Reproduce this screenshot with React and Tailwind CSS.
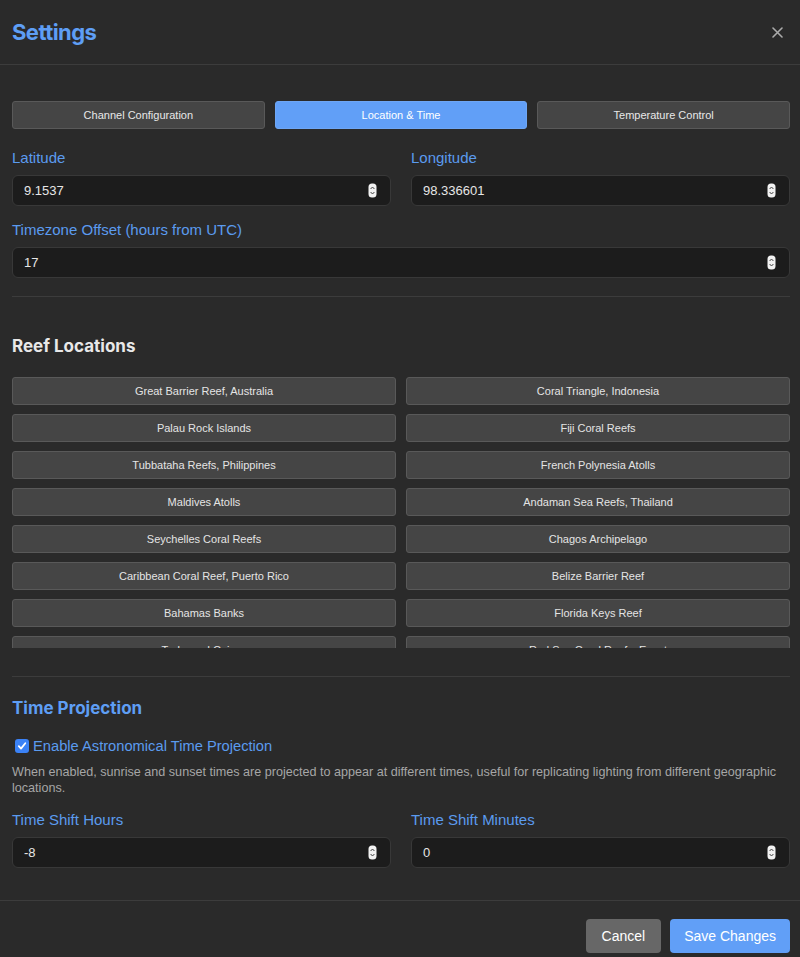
import React, { useState } from 'react';

const reefs = [
  'Great Barrier Reef, Australia',
  'Coral Triangle, Indonesia',
  'Palau Rock Islands',
  'Fiji Coral Reefs',
  'Tubbataha Reefs, Philippines',
  'French Polynesia Atolls',
  'Maldives Atolls',
  'Andaman Sea Reefs, Thailand',
  'Seychelles Coral Reefs',
  'Chagos Archipelago',
  'Caribbean Coral Reef, Puerto Rico',
  'Belize Barrier Reef',
  'Bahamas Banks',
  'Florida Keys Reef',
  'Turks and Caicos',
  'Red Sea Coral Reefs, Egypt',
];

const tabs = ['Channel Configuration', 'Location & Time', 'Temperature Control'];

const heading = { fontFamily: 'Inter, "Noto Sans", sans-serif' };

function Spinner() {
  return (
    <svg width="9" height="15" viewBox="0 0 9 15" className="shrink-0">
      <rect x="0.5" y="0.5" width="8" height="14" rx="3.5" fill="#f2f2f2" />
      <path d="M2.6 6 L4.5 4 L6.4 6" stroke="#444" strokeWidth="1" fill="none" />
      <path d="M2.6 9 L4.5 11 L6.4 9" stroke="#444" strokeWidth="1" fill="none" />
    </svg>
  );
}

function NumberField({ label, value, className = '' }) {
  return (
    <div className={className}>
      <div className="text-[15px] leading-5 text-[#5b9bef]">{label}</div>
      <div className="mt-[7px] h-[31px] flex items-center justify-between rounded-md border border-[#383838] bg-[#1c1c1c] pl-[11px] pr-[13px]">
        <span className="text-[13px] text-[#e6e6e6]">{value}</span>
        <Spinner />
      </div>
    </div>
  );
}

export default function App() {
  const [active, setActive] = useState(1);
  const [enabled, setEnabled] = useState(true);

  return (
    <div className="min-h-screen bg-[#2a2a2a] text-white" style={{ fontFamily: '"Liberation Sans", Arial, sans-serif' }}>
      {/* header */}
      <div className="h-[65px] flex items-center justify-between pl-3 pr-[17px] border-b border-[#3c3c3c]">
        <h1 className="text-[22px] font-bold text-[#5e9ef5] tracking-tight" style={heading}>Settings</h1>
        <button className="p-0">
          <svg width="11" height="11" viewBox="0 0 11 11">
            <path d="M1 1 L10 10 M10 1 L1 10" stroke="#ababab" strokeWidth="1.6" strokeLinecap="round" />
          </svg>
        </button>
      </div>

      <div className="pl-3 pr-[10px] pt-9">
        {/* tabs */}
        <div className="grid grid-cols-3 gap-[10px]">
          {tabs.map((t, i) => (
            <button
              key={t}
              onClick={() => setActive(i)}
              className={
                i === active
                  ? 'h-[28px] rounded-[3px] border border-[#6ea6f5] bg-[#619ff7] text-[11px] text-white'
                  : 'h-[28px] rounded-[3px] border border-[#595959] bg-[#454545] text-[11px] text-[#e8e8e8]'
              }
            >
              {t}
            </button>
          ))}
        </div>

        {/* location */}
        <div className="mt-[19px] grid grid-cols-2 gap-5">
          <NumberField label="Latitude" value="9.1537" />
          <NumberField label="Longitude" value="98.336601" />
        </div>
        <NumberField className="mt-[14px]" label="Timezone Offset (hours from UTC)" value="17" />

        <div className="mt-[18px] border-t border-[#3c3c3c]" />

        {/* reef locations */}
        <h2 className="mt-[37px] text-[17px] leading-6 font-bold text-[#e8e8e8]" style={heading}>Reef Locations</h2>
        <div className="mt-[19px] h-[271px] overflow-hidden">
          <div className="grid grid-cols-2 gap-x-[10px] gap-y-[9px]">
            {reefs.map((r) => (
              <button
                key={r}
                className="h-[28px] rounded-[3px] border border-[#595959] bg-[#454545] text-[11px] text-[#e4e4e4]"
              >
                {r}
              </button>
            ))}
          </div>
        </div>

        <div className="mt-[28px] border-t border-[#3c3c3c]" />

        {/* time projection */}
        <h2 className="mt-[19px] text-[17px] leading-6 font-bold text-[#5e9ef5]" style={heading}>Time Projection</h2>
        <label className="mt-[16px] flex items-center gap-[4px] text-[14.7px] leading-5 text-[#5b9bef] cursor-pointer">
          <span
            onClick={() => setEnabled(!enabled)}
            className="ml-[3px] w-[14px] h-[14px] rounded-[3px] bg-[#3b82f6] flex items-center justify-center"
          >
            {enabled && (
              <svg width="10" height="10" viewBox="0 0 10 10">
                <path d="M1.8 5.2 L4 7.6 L8.3 2.3" stroke="white" strokeWidth="1.8" fill="none" strokeLinecap="round" strokeLinejoin="round" />
              </svg>
            )}
          </span>
          Enable Astronomical Time Projection
        </label>
        <p className="mt-[8px] text-[12.6px] leading-4 text-[#a6a6a6]">
          When enabled, sunrise and sunset times are projected to appear at different times, useful for replicating lighting from different geographic locations.
        </p>
        <div className="mt-[14px] grid grid-cols-2 gap-5">
          <NumberField label="Time Shift Hours" value="-8" />
          <NumberField label="Time Shift Minutes" value="0" />
        </div>
      </div>

      {/* footer */}
      <div className="mt-[32px] border-t border-[#3c3c3c] px-[10px] pt-[18px] pb-4 flex justify-end gap-[9px]">
        <button className="h-[34px] px-[16px] rounded-[4px] bg-[#676767] text-[14px] text-white">Cancel</button>
        <button className="h-[34px] px-[14px] rounded-[4px] bg-[#619ff7] text-[14px] text-white">Save Changes</button>
      </div>
    </div>
  );
}
